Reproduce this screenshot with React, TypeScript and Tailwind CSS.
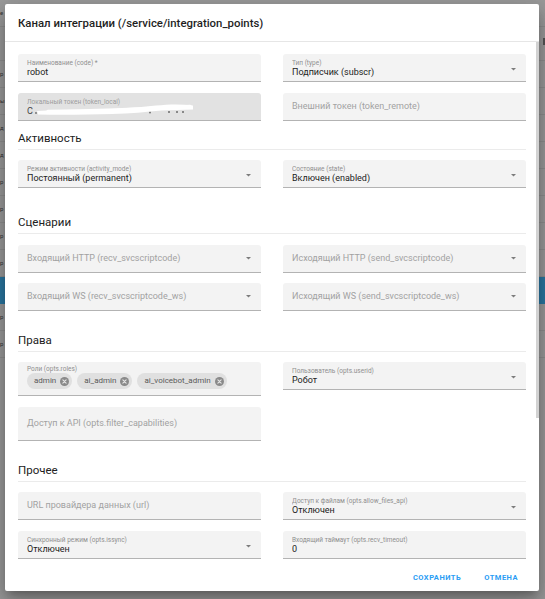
import React from "react";

// Small dropdown caret used by select fields
function Caret() {
  return (
    <svg width="5" height="3" viewBox="0 0 5 3" className="shrink-0">
      <path d="M0 0h5L2.5 2.6z" fill="#7c7c7c" />
    </svg>
  );
}

// Close icon for chips (circle with a cross)
function ChipClose() {
  return (
    <svg width="9" height="9" viewBox="0 0 10 10" className="shrink-0">
      <circle cx="5" cy="5" r="5" fill="#8a8a8a" />
      <path d="M3.2 3.2l3.6 3.6M6.8 3.2L3.2 6.8" stroke="#e6e6e6" strokeWidth="1.2" strokeLinecap="round" />
    </svg>
  );
}

type FieldProps = {
  label?: string;
  value?: string;
  placeholder?: string;
  select?: boolean;
};

// Filled input with a floating label and value
function Field({ label, value, placeholder, select }: FieldProps) {
  if (placeholder) {
    return (
      <div className="flex h-[28px] items-center rounded-t-[3px] border-b border-[#b3b3b3] bg-[#f3f3f3] px-[9px]">
        <div className="min-w-0 flex-1 truncate text-[9px] leading-[11px] text-[#a2a2a2]">{placeholder}</div>
        {select && (
          <div className="pr-[1px]">
            <Caret />
          </div>
        )}
      </div>
    );
  }
  return (
    <div className="flex h-[28px] rounded-t-[3px] border-b border-[#b3b3b3] bg-[#f3f3f3] px-[9px]">
      <div className="min-w-0 flex-1 pt-[5px]">
        <div className="truncate text-[6.5px] leading-[8px] text-[#8f8f8f]">{label}</div>
        <div className="truncate text-[9px] leading-[11px] text-[#222]">{value}</div>
      </div>
      {select && (
        <div className="flex items-center pr-[1px] pt-[3px]">
          <Caret />
        </div>
      )}
    </div>
  );
}

// Read-only token field with the secret value brushed out
function TokenField() {
  return (
    <div className="relative flex h-[28px] rounded-t-[3px] border-b border-[#b3b3b3] bg-[#e2e2e2] px-[9px]">
      <div className="min-w-0 flex-1 pt-[5px]">
        <div className="truncate text-[6.5px] leading-[8px] text-[#9c9c9c]">Локальный токен (token_local)</div>
        <div className="truncate text-[9px] leading-[11px] text-[#444]">С</div>
      </div>
      <svg className="absolute left-[14px] top-[7px]" width="164" height="17" viewBox="0 0 164 17">
        <defs>
          <filter id="brush" x="-5%" y="-40%" width="110%" height="180%">
            <feGaussianBlur stdDeviation="0.45" />
          </filter>
        </defs>
        <circle cx="4" cy="13" r="0.9" fill="#6a6a6a" />
        <circle cx="7" cy="13" r="0.9" fill="#6a6a6a" />
        <circle cx="118" cy="12.5" r="0.9" fill="#6a6a6a" />
        <circle cx="137" cy="12" r="1" fill="#6a6a6a" />
        <circle cx="145" cy="12" r="1" fill="#6a6a6a" />
        <circle cx="151" cy="12" r="1" fill="#6a6a6a" />
        <path
          d="M5 11 C24 9.5 44 10 64 9.5 C86 9 104 7.5 124 5.5 C138 4 150 4 161 5.5 L161 9.5 C150 10 140 10 130 10.5 C114 12 98 13.5 80 14 C58 14.5 32 15 6 14.5 Z"
          fill="#ffffff"
          filter="url(#brush)"
        />
        <path d="M16 11.5 C60 11 104 9.5 158 6.5" stroke="#ffffff" strokeWidth="3.5" strokeLinecap="round" fill="none" filter="url(#brush)" />
      </svg>
    </div>
  );
}

function Chip({ text }: { text: string }) {
  return (
    <div className="flex h-[16px] items-center gap-[4px] rounded-full bg-[#e0e0e0] pl-[7px] pr-[3px]">
      <span className="text-[8px] leading-[10px] text-[#5a5a5a]">{text}</span>
      <ChipClose />
    </div>
  );
}

// Multi-select field with chips
function RolesField() {
  return (
    <div className="h-[34px] rounded-t-[3px] border-b border-[#b3b3b3] bg-[#f3f3f3] px-[9px] pt-[3px]">
      <div className="text-[6.5px] leading-[8px] text-[#8f8f8f]">Роли (opts.roles)</div>
      <div className="flex gap-[5px]">
        <Chip text="admin" />
        <Chip text="ai_admin" />
        <Chip text="ai_voicebot_admin" />
      </div>
    </div>
  );
}

function TallPlaceholder({ text }: { text: string }) {
  return (
    <div className="flex h-[34px] items-center rounded-t-[3px] border-b border-[#b3b3b3] bg-[#f3f3f3] px-[9px]">
      <div className="text-[9px] leading-[11px] text-[#a2a2a2]">{text}</div>
    </div>
  );
}

function SectionTitle({ children, className }: { children: React.ReactNode; className: string }) {
  return (
    <div className={className}>
      <div className="border-b border-[#ebebeb] pb-[4px] text-[11.5px] leading-[14px] text-[#222]">{children}</div>
    </div>
  );
}

const pageRows = ["р", "ы", "д", "д", "р", "р", "р", "р"];

export default function App() {
  return (
    <div className="relative h-[599px] w-[545px] overflow-hidden bg-[#9b9b9b] [font-family:Roboto,sans-serif]">
      {/* Page behind the dimming scrim */}
      <div className="flex flex-col text-[6px] leading-[8px] text-[#333]">
        <div className="flex h-[27px] items-center border-b border-[#8f8f8f]">
          <span>е</span>
        </div>
        <div className="flex h-[34px] items-start justify-end border-b border-[#8f8f8f] pt-[11px]">
          <div className="h-[7px] w-[2px] bg-[#555]" />
        </div>
        {pageRows.map((ch, i) => (
          <div key={i} className="flex h-[27px] items-center border-b border-[#8f8f8f]">
            <span>{ch}</span>
          </div>
        ))}
        <div className="h-[27px] bg-[#2a77a2]" />
        <div className="flex h-[27px] items-center border-b border-[#8f8f8f]">
          <span>р</span>
        </div>
        <div className="flex h-[27px] items-center border-b border-[#8f8f8f]">
          <span>р</span>
        </div>
      </div>

      {/* Dialog */}
      <div className="absolute left-[5px] top-[4px] flex h-[587px] w-[534px] flex-col overflow-hidden rounded-[2px] bg-white shadow-[0_6px_8px_-4px_rgba(0,0,0,0.25),0_13px_20px_2px_rgba(0,0,0,0.16),0_5px_25px_4px_rgba(0,0,0,0.14)]">
        <div className="flex h-[38px] shrink-0 items-center border-b border-[#e6e6e6] px-[13px]">
          <div className="text-[11.4px] font-medium leading-[14px] text-[#1f1f1f]">Канал интеграции (/service/integration_points)</div>
        </div>

        <div className="relative flex-1">
          {/* scroll thumb */}
          <div className="absolute right-0 top-0 h-[376px] w-[3px] bg-[#d2d2d2]" />

          <div className="px-[13px] pt-[12px]">
            <div className="grid grid-cols-2 gap-x-[22px] gap-y-[11px]">
              <Field label="Наименование (code) *" value="robot" />
              <Field label="Тип (type)" value="Подписчик (subscr)" select />
              <TokenField />
              <Field placeholder="Внешний токен (token_remote)" />
            </div>

            <SectionTitle className="mt-[10px]">Активность</SectionTitle>
            <div className="mt-[10px] grid grid-cols-2 gap-x-[22px] gap-y-[11px]">
              <Field label="Режим активности (activity_mode)" value="Постоянный (permanent)" select />
              <Field label="Состояние (state)" value="Включен (enabled)" select />
            </div>

            <SectionTitle className="mt-[27px]">Сценарии</SectionTitle>
            <div className="mt-[11px] grid grid-cols-2 gap-x-[22px] gap-y-[10px]">
              <Field placeholder="Входящий HTTP (recv_svcscriptcode)" select />
              <Field placeholder="Исходящий HTTP (send_svcscriptcode)" select />
              <Field placeholder="Входящий WS (recv_svcscriptcode_ws)" select />
              <Field placeholder="Исходящий WS (send_svcscriptcode_ws)" select />
            </div>

            <SectionTitle className="mt-[22px]">Права</SectionTitle>
            <div className="mt-[10px] grid grid-cols-2 items-start gap-x-[22px] gap-y-[11px]">
              <RolesField />
              <Field label="Пользователь (opts.userid)" value="Робот" select />
              <TallPlaceholder text="Доступ к API (opts.filter_capabilities)" />
            </div>

            <SectionTitle className="mt-[22px]">Прочее</SectionTitle>
            <div className="mt-[10px] grid grid-cols-2 gap-x-[22px] gap-y-[11px]">
              <Field placeholder="URL провайдера данных (url)" />
              <Field label="Доступ к файлам (opts.allow_files_api)" value="Отключен" select />
              <Field label="Синхронный режим (opts.issync)" value="Отключен" select />
              <Field label="Входящий таймаут (opts.recv_timeout)" value="0" />
            </div>

            <div className="mt-[6px] flex h-[26px] items-center justify-end gap-[23px] pr-[8px] text-[7.5px] font-bold tracking-[0.5px] text-[#2a9df4]">
              <span>СОХРАНИТЬ</span>
              <span>ОТМЕНА</span>
            </div>
          </div>
        </div>
      </div>
    </div>
  );
}
